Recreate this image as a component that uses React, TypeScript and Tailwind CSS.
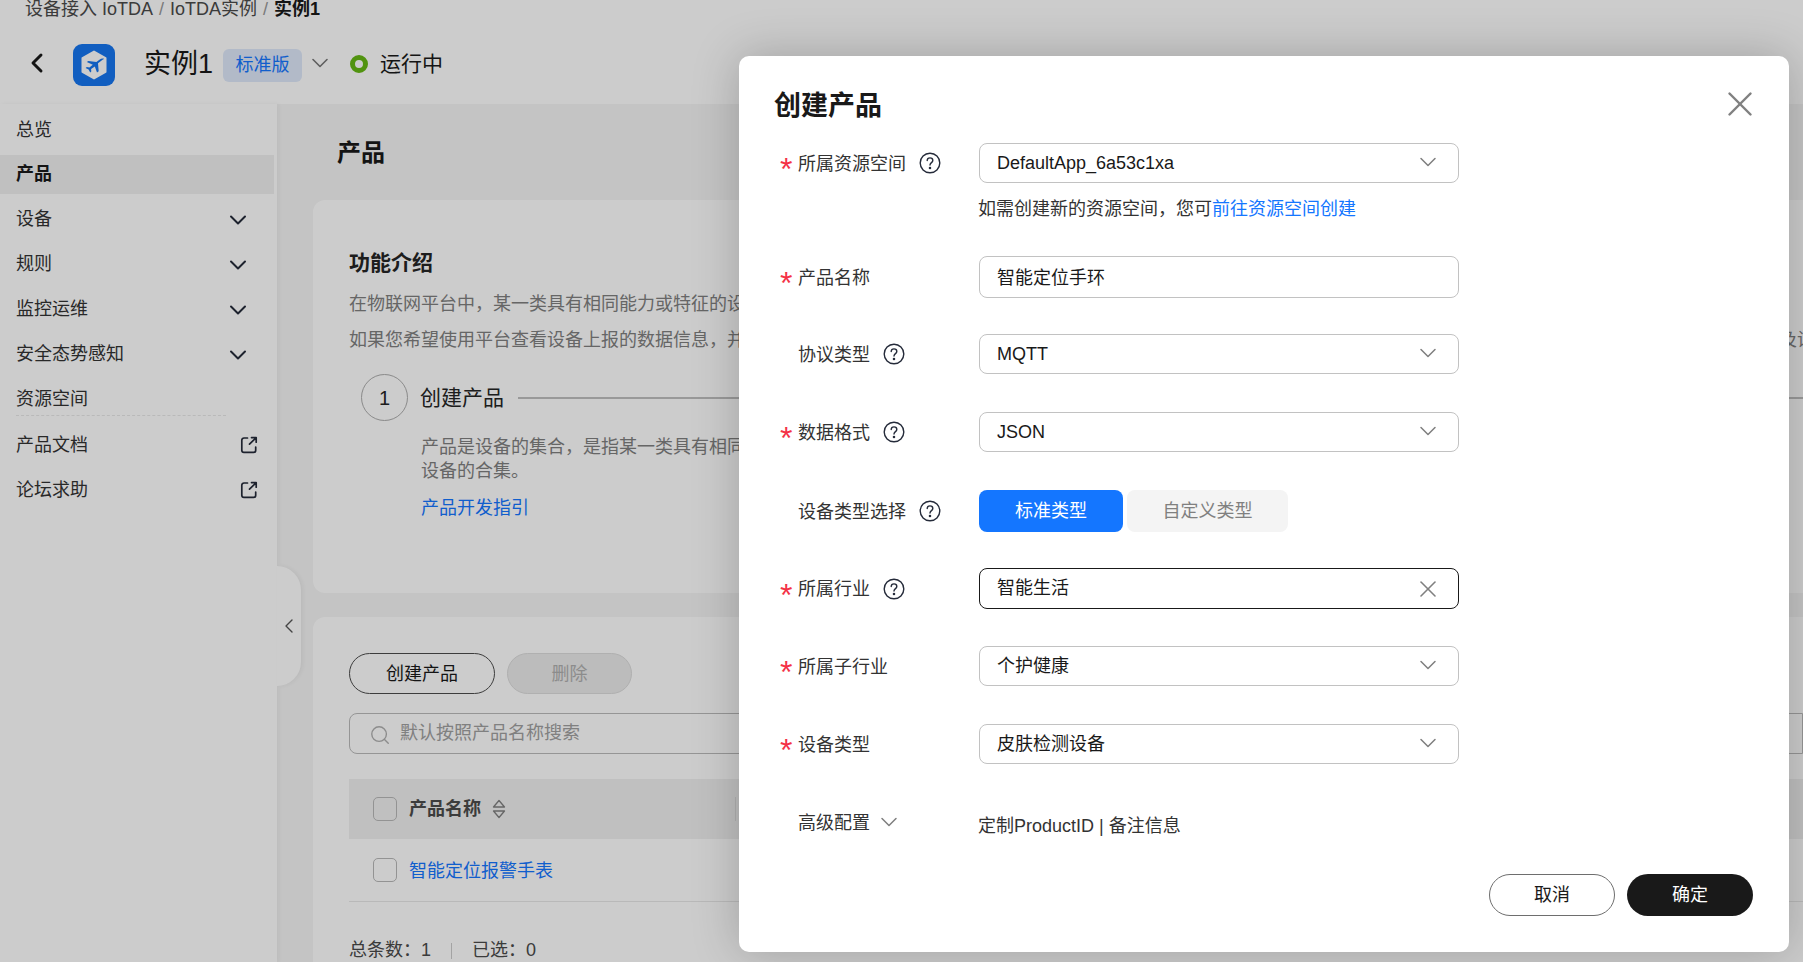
import { ChevronDown, ChevronLeft, Search, X } from "lucide-react";

const menu = [
  { label: "总览" },
  { label: "产品", active: true },
  { label: "设备", arrow: true },
  { label: "规则", arrow: true },
  { label: "监控运维", arrow: true },
  { label: "安全态势感知", arrow: true },
  { label: "资源空间" },
];

function Help() {
  return (
    <svg width="22" height="22" viewBox="0 0 22 22" fill="none" stroke="#252b3a" strokeWidth="1.4" className="ml-[13px] shrink-0">
      <circle cx="11" cy="11" r="9.8" />
      <path d="M8.2 8.6c0-1.7 1.2-2.7 2.8-2.7s2.8 1 2.8 2.5c0 2.2-2.8 2.2-2.8 4.6" strokeLinecap="round" />
      <circle cx="11" cy="16" r="0.6" fill="#252b3a" />
    </svg>
  );
}

function OpenLink() {
  return (
    <svg width="18" height="18" viewBox="0 0 18 18" fill="none" stroke="#252b3a" strokeWidth="1.7" strokeLinecap="round" strokeLinejoin="round">
      <path d="M7.5 2H4a2.2 2.2 0 0 0-2.2 2.2v10A2.2 2.2 0 0 0 4 16.4h9.5a2.2 2.2 0 0 0 2.2-2.2V11" />
      <path d="M9.5 8.2 16 1.8M11.5 1.6H16.2V6.2" />
    </svg>
  );
}

function Label({ text, required, help }: { text: string; required?: boolean; help?: boolean }) {
  return (
    <div className="flex w-[240px] shrink-0 items-center pl-[41px] text-[18px] text-[#333]">
      <span className="h-[24px] w-[18px] shrink-0 text-[32px] leading-[36px] text-[#f43146]">{required ? "*" : ""}</span>
      <span className="translate-y-px">{text}</span>
      {help && <Help />}
    </div>
  );
}

function Select({ value }: { value: string }) {
  return (
    <div className="flex h-[40px] w-[480px] items-center justify-between rounded-[8px] border border-[#c2c2c2] pl-[17px] pr-[16px] text-[18px] text-[#191919]">
      <span>{value}</span>
      <ChevronDown size={28} strokeWidth={1.3} color="#808080" className="-translate-y-px" />
    </div>
  );
}

export default function App() {
  return (
    <div className="relative h-[962px] w-[1803px] overflow-hidden bg-white font-['Liberation_Sans','Noto_Sans_CJK_SC',sans-serif] text-[18px] text-[#191919]">
      <div className="flex h-[18px] items-start pl-[25px] leading-[18px] text-[#4a4a4a]">
        <span>设备接入 IoTDA</span>
        <span className="mx-[6px] text-[#999]">/</span>
        <span>IoTDA实例</span>
        <span className="mx-[6px] text-[#999]">/</span>
        <span className="font-bold text-[#191919]">实例1</span>
      </div>

      <div className="flex h-[86px] items-center pt-[8px]">
        <ChevronLeft size={32} strokeWidth={2.2} className="ml-[21px] -translate-y-[2px]" color="#191919" />
        <div className="ml-[20px] flex h-[42px] w-[42px] items-center justify-center rounded-[9px] bg-[#1676f0]">
          <svg width="32" height="32" viewBox="0 0 32 32">
            <path d="M16 2.5 27.5 9v14L16 29.5 4.5 23V9z" fill="#fff" stroke="#fff" strokeWidth="2" strokeLinejoin="round" />
            <path d="M26 9.8c-1.2-.7-3-.2-4.6 1l-3 2.3-8-1.1-1.6 1.1 6 2.6-3.4 2.7-2.6-.4-1.2.9 3 1.6 1.6 3 1.1-.9-.2-2.6 3.7-2.6 2.2 6 1.7-1.2-.7-8 3.3-2.4c1.4-1 2.2-1.4 2.7-2z" fill="#1676f0" />
          </svg>
        </div>
        <span className="ml-[29px] -translate-y-px text-[27px] text-[#191919]">实例1</span>
        <span className="ml-[10px] flex h-[33px] w-[79px] items-center justify-center rounded-[6px] bg-[#dfe9fb] text-[18px] text-[#1476ff]">标准版</span>
        <ChevronDown size={28} strokeWidth={1.4} color="#777" className="ml-[4px] -translate-y-[2px]" />
        <span className="ml-[16px] h-[18px] w-[18px] -translate-y-px rounded-full border-[5px] border-[#66b814]" />
        <span className="ml-[12px] -translate-y-px text-[21px] text-[#191919]">运行中</span>
      </div>

      <div className="flex h-[858px]">
        <aside className="relative w-[277px] shrink-0 bg-white pt-[4px] shadow-[2px_0_4px_rgba(0,0,0,0.04)]">
          {menu.map((item) =>
            item.active ? (
              <div key={item.label} className="mb-[3px] mr-[3px] mt-[2px] flex h-[39px] items-center bg-[#f0f0f0] pl-[16px] font-bold">
                {item.label}
              </div>
            ) : (
              <div key={item.label} className="flex h-[45px] items-center justify-between pl-[16px] pr-[25px] text-[#333]">
                {item.label}
                {item.arrow && <ChevronDown size={28} strokeWidth={1.7} color="#252b3a" />}
              </div>
            )
          )}
          <div className="ml-[16px] mt-[-7px] w-[210px] border-t border-dashed border-[#e8e8e8]" />
          <div className="mt-[9px] flex flex-col gap-[5px]">
            {["产品文档", "论坛求助"].map((label) => (
              <div key={label} className="flex h-[40px] items-center justify-between pl-[16px] pr-[19px] text-[#333]">
                {label}
                <OpenLink />
              </div>
            ))}
          </div>
          <div className="absolute -right-[24px] top-[462px] flex h-[120px] w-[24px] items-center justify-center rounded-r-[24px] bg-white shadow-[2px_0_4px_rgba(0,0,0,0.05)]">
            <ChevronLeft size={24} strokeWidth={1.4} color="#555" />
          </div>
        </aside>

        <main className="min-w-0 flex-1 overflow-hidden bg-[#f5f5f5] pl-[36px]">
          <h1 className="h-[96px] pl-[24px] pt-[32px] text-[24px] font-bold leading-[34px] text-[#191919]">产品</h1>
          <section className="h-[393px] rounded-l-[12px] bg-white pl-[36px] pt-[47px]">
            <h2 className="text-[21px] font-bold leading-[32px] text-[#252525]">功能介绍</h2>
            <p className="mt-[7px] whitespace-nowrap leading-[36px] text-[#808080]">
              在物联网平台中，某一类具有相同能力或特征的设备的合集被称为一款产品。
            </p>
            <p className="whitespace-nowrap leading-[36px] text-[#808080]">
              如果您希望使用平台查看设备上报的数据信息，并对设备进行管理，您需要先创建产品并定义产品模型，然后注册设备，使设备接入IoT平台。如需了解更多，请查阅产品开发指引以及设备接入
            </p>
            <div className="mt-[16px] flex h-[47px] items-center pl-[12px]">
              <span className="flex h-[47px] w-[47px] items-center justify-center rounded-full border border-[#adadad] text-[20px] text-[#252525]">1</span>
              <span className="ml-[12px] text-[21px] text-[#252525]">创建产品</span>
              <span className="ml-[14px] h-[2px] flex-1 bg-[#c0c0c0]" />
            </div>
            <p className="ml-[72px] mt-[14px] leading-[24px] text-[#808080]">
              产品是设备的集合，是指某一类具有相同功能定义的
              <br />
              设备的合集。
            </p>
            <p className="ml-[72px] mt-[13px] leading-[24px] text-[#1476ff]">产品开发指引</p>
          </section>

          <section className="mt-[24px] h-[360px] rounded-l-[12px] bg-white pl-[36px] pt-[36px]">
            <div className="flex gap-[12px]">
              <span className="flex h-[41px] w-[146px] items-center justify-center rounded-full border border-[#4c4c4c] pt-[2px] text-[#191919]">创建产品</span>
              <span className="flex h-[41px] w-[125px] items-center justify-center rounded-full border border-[#dcdcdc] bg-[#ebebeb] pt-[2px] text-[#b0b0b0]">删除</span>
            </div>
            <div className="mt-[19px] flex h-[41px] items-center rounded-l-[8px] border border-[#bbb] pl-[19px] text-[#a0a0a0]">
              <Search size={22} strokeWidth={1.5} color="#b0b0b0" className="translate-y-px" />
              <span className="ml-[9px]">默认按照产品名称搜索</span>
            </div>
            <div className="mt-[25px] flex h-[60px] items-center bg-[#f0f0f0] pl-[24px]">
              <span className="h-[24px] w-[24px] rounded-[5px] border border-[#b8b8b8]" />
              <span className="ml-[12px] font-bold text-[#4c4c4c]">产品名称</span>
              <svg width="14" height="20" viewBox="0 0 14 20" fill="none" stroke="#808080" strokeWidth="1.3" className="ml-[11px]">
                <path d="M7 1.5 12.5 8h-11zM7 18.5 1.5 12h11z" strokeLinejoin="round" />
              </svg>
              <span className="ml-[229px] h-[24px] w-px bg-[#ddd]" />
            </div>
            <div className="flex h-[63px] items-center border-b border-[#e8e8e8] pl-[24px]">
              <span className="h-[24px] w-[24px] rounded-[5px] border border-[#b8b8b8]" />
              <span className="ml-[12px] translate-y-px text-[#1476ff]">智能定位报警手表</span>
            </div>
            <div className="mt-[35px] flex items-center text-[#4a4a4a]">
              <span>总条数：1</span>
              <span className="mx-[20px] h-[16px] w-px bg-[#ccc]" />
              <span>已选：0</span>
            </div>
          </section>
        </main>
      </div>

      <div className="absolute inset-0 bg-black/20" />

      <div className="absolute left-[739px] top-[56px] flex h-[896px] w-[1050px] flex-col rounded-[10px] bg-white shadow-[0_0_48px_rgba(0,0,0,0.22)]">
        <h2 className="pl-[35px] pt-[33px] text-[27px] font-bold leading-[34px] text-[#191919]">创建产品</h2>
        <X size={42} strokeWidth={1.4} color="#808080" className="absolute right-[28px] top-[27px]" />

        <div className="mt-[20px] flex items-center">
          <Label text="所属资源空间" required help />
          <Select value="DefaultApp_6a53c1xa" />
        </div>
        <p className="ml-[239px] mt-[13px] leading-[26px] text-[#333]">
          如需创建新的资源空间，您可<span className="text-[#1476ff]">前往资源空间创建</span>
        </p>

        <div className="mt-[34px] flex items-center">
          <Label text="产品名称" required />
          <div className="flex h-[42px] w-[480px] items-center rounded-[8px] border border-[#c2c2c2] pl-[17px] pt-[2px] text-[#191919]">智能定位手环</div>
        </div>

        <div className="mt-[36px] flex items-center">
          <Label text="协议类型" help />
          <Select value="MQTT" />
        </div>

        <div className="mt-[38px] flex items-center">
          <Label text="数据格式" required help />
          <Select value="JSON" />
        </div>

        <div className="mt-[38px] flex items-center">
          <Label text="设备类型选择" help />
          <span className="flex h-[42px] w-[144px] items-center justify-center rounded-[8px] bg-[#1476ff] text-white">标准类型</span>
          <span className="ml-[4px] flex h-[42px] w-[161px] items-center justify-center rounded-[8px] bg-[#f4f4f4] text-[#808080]">自定义类型</span>
        </div>

        <div className="mt-[36px] flex items-center">
          <Label text="所属行业" required help />
          <div className="flex h-[41px] w-[480px] items-center justify-between rounded-[8px] border border-[#191919] pl-[17px] pr-[16px] text-[#191919]">
            <span>智能生活</span>
            <X size={28} strokeWidth={1.4} color="#808080" />
          </div>
        </div>

        <div className="mt-[37px] flex items-center">
          <Label text="所属子行业" required />
          <Select value="个护健康" />
        </div>

        <div className="mt-[38px] flex items-center">
          <Label text="设备类型" required />
          <Select value="皮肤检测设备" />
        </div>

        <div className="mt-[45px] flex items-center">
          <div className="flex w-[240px] shrink-0 items-center pl-[59px] text-[#333]">
            高级配置
            <ChevronDown size={28} strokeWidth={1.3} color="#808080" className="ml-[5px] -translate-y-px" />
          </div>
          <span className="-ml-[1px] translate-y-[3px] text-[#333]">定制ProductID | 备注信息</span>
        </div>

        <div className="mt-auto flex justify-end gap-[12px] pb-[36px] pr-[36px]">
          <span className="flex h-[42px] w-[126px] items-center justify-center rounded-full border border-[#6e6e6e] text-[#191919]">取消</span>
          <span className="flex h-[42px] w-[126px] items-center justify-center rounded-full bg-[#191919] text-white">确定</span>
        </div>
      </div>
    </div>
  );
}
